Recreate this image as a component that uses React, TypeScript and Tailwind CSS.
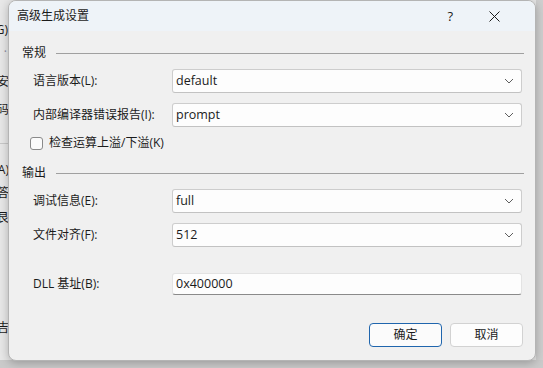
import React from "react";

const font = { fontFamily: '"Open Sans", "Noto Sans CJK SC", sans-serif' };

function Chevron() {
  return (
    <svg width="10" height="6" viewBox="0 0 10 6" className="shrink-0">
      <path d="M1 1 L5 5 L9 1" fill="none" stroke="#5f5f5f" strokeWidth="1" />
    </svg>
  );
}

function Combo({ value }: { value: string }) {
  return (
    <div className="w-[350px] h-[24px] bg-[#fdfdfd] border border-[#cdcdcd] border-b-[#c2c2c2] rounded-[3px] flex items-center pl-[3px] pr-[7px] justify-between">
      <span className="text-[12.5px] text-[#1b1b1b] leading-none">{value}</span>
      <Chevron />
    </div>
  );
}

function Row({ label, children }: { label: string; children: React.ReactNode }) {
  return (
    <div className="flex items-center pl-[24px]">
      <div className="w-[139px] text-[12px] text-[#1b1b1b] leading-none">{label}</div>
      {children}
    </div>
  );
}

function GroupHeader({ title }: { title: string }) {
  return (
    <div className="flex items-center h-[16px] pl-[13px] pr-[11px]">
      <span className="text-[12px] text-[#1b1b1b] leading-none">{title}</span>
      <div className="flex-1 ml-[10px] h-px bg-[#a0a0a0]" />
    </div>
  );
}

export default function App() {
  return (
    <div className="relative w-[543px] h-[368px] overflow-hidden bg-[#e6e6e6]" style={font}>
      {/* background window fragments */}
      <div className="absolute left-0 top-0 w-[10px] h-[368px] bg-[#e8e8e8] text-[12px] text-[#1b1b1b] leading-none">
        <span className="absolute right-[2px] top-[24px]">G)</span>
        <span className="absolute right-[3px] top-[46px] text-[#8a8aa0]">·</span>
        <span className="absolute right-[1px] top-[76px]">安</span>
        <span className="absolute right-[1px] top-[104px]">码</span>
        <div className="absolute left-0 right-0 top-[143px] h-px bg-[#c8c8c8]" />
        <span className="absolute right-[1px] top-[164px]">A)</span>
        <span className="absolute right-[1px] top-[187px]">答</span>
        <span className="absolute right-[1px] top-[212px]">艮</span>
        <span className="absolute right-[1px] top-[322px]">吉</span>
      </div>
      <div className="absolute left-[536px] top-0 w-[7px] h-[368px] bg-[#cfcfcf]" />
      <div className="absolute left-0 top-[360px] w-[543px] h-[8px] bg-[#cacaca]" />

      {/* dialog */}
      <div className="absolute left-[8px] top-0 w-[528px] h-[361px] rounded-[8px] border border-[#b4b4b4] bg-[#f0f0f0] overflow-hidden flex flex-col shadow-[0_2px_10px_rgba(0,0,0,0.25)]">
        <div className="h-[30px] shrink-0 bg-[#eef3f8] flex items-center pl-[8px]">
          <span className="text-[12px] text-[#1b1b1b] leading-none">高级生成设置</span>
          <div className="flex-1" />
          <span className="text-[13px] text-[#1b1b1b] leading-none mr-[36px]">?</span>
          <svg width="11" height="11" viewBox="0 0 11 11" className="mr-[35px]">
            <path d="M0.5 0.5 L10.5 10.5 M10.5 0.5 L0.5 10.5" stroke="#1b1b1b" strokeWidth="1" />
          </svg>
        </div>

        <div className="mt-[14px]">
          <GroupHeader title="常规" />
        </div>
        <div className="mt-[8px]">
          <Row label="语言版本(L):">
            <Combo value="default" />
          </Row>
        </div>
        <div className="mt-[10px]">
          <Row label="内部编译器错误报告(I):">
            <Combo value="prompt" />
          </Row>
        </div>
        <div className="mt-[8px] h-[16px] flex items-center pl-[21px]">
          <div className="w-[13px] h-[13px] rounded-[3px] border border-[#8a8a8a] bg-[#fbfbfb]" />
          <span className="ml-[6px] text-[12px] text-[#1b1b1b] leading-none">检查运算上溢/下溢(K)</span>
        </div>

        <div className="mt-[14px]">
          <GroupHeader title="输出" />
        </div>
        <div className="mt-[8px]">
          <Row label="调试信息(E):">
            <Combo value="full" />
          </Row>
        </div>
        <div className="mt-[10px]">
          <Row label="文件对齐(F):">
            <Combo value="512" />
          </Row>
        </div>
        <div className="mt-[26px]">
          <Row label="DLL 基址(B):">
            <div className="w-[350px] h-[22px] bg-[#fdfdfd] border border-[#e3e3e3] border-b-[#8a8a8a] rounded-[3px] flex items-center pl-[3px]">
              <span className="text-[12.5px] text-[#1b1b1b] leading-none">0x400000</span>
            </div>
          </Row>
        </div>

        <div className="mt-[28px] flex justify-end pr-[12px] gap-[8px]">
          <button className="w-[73px] h-[24px] rounded-[4px] border border-[#1f65ad] bg-[#fbfbfb] text-[12px] text-[#1b1b1b] leading-none">
            确定
          </button>
          <button className="w-[73px] h-[24px] rounded-[4px] border border-[#d2d2d2] bg-[#fdfdfd] text-[12px] text-[#1b1b1b] leading-none">
            取消
          </button>
        </div>
      </div>
    </div>
  );
}
